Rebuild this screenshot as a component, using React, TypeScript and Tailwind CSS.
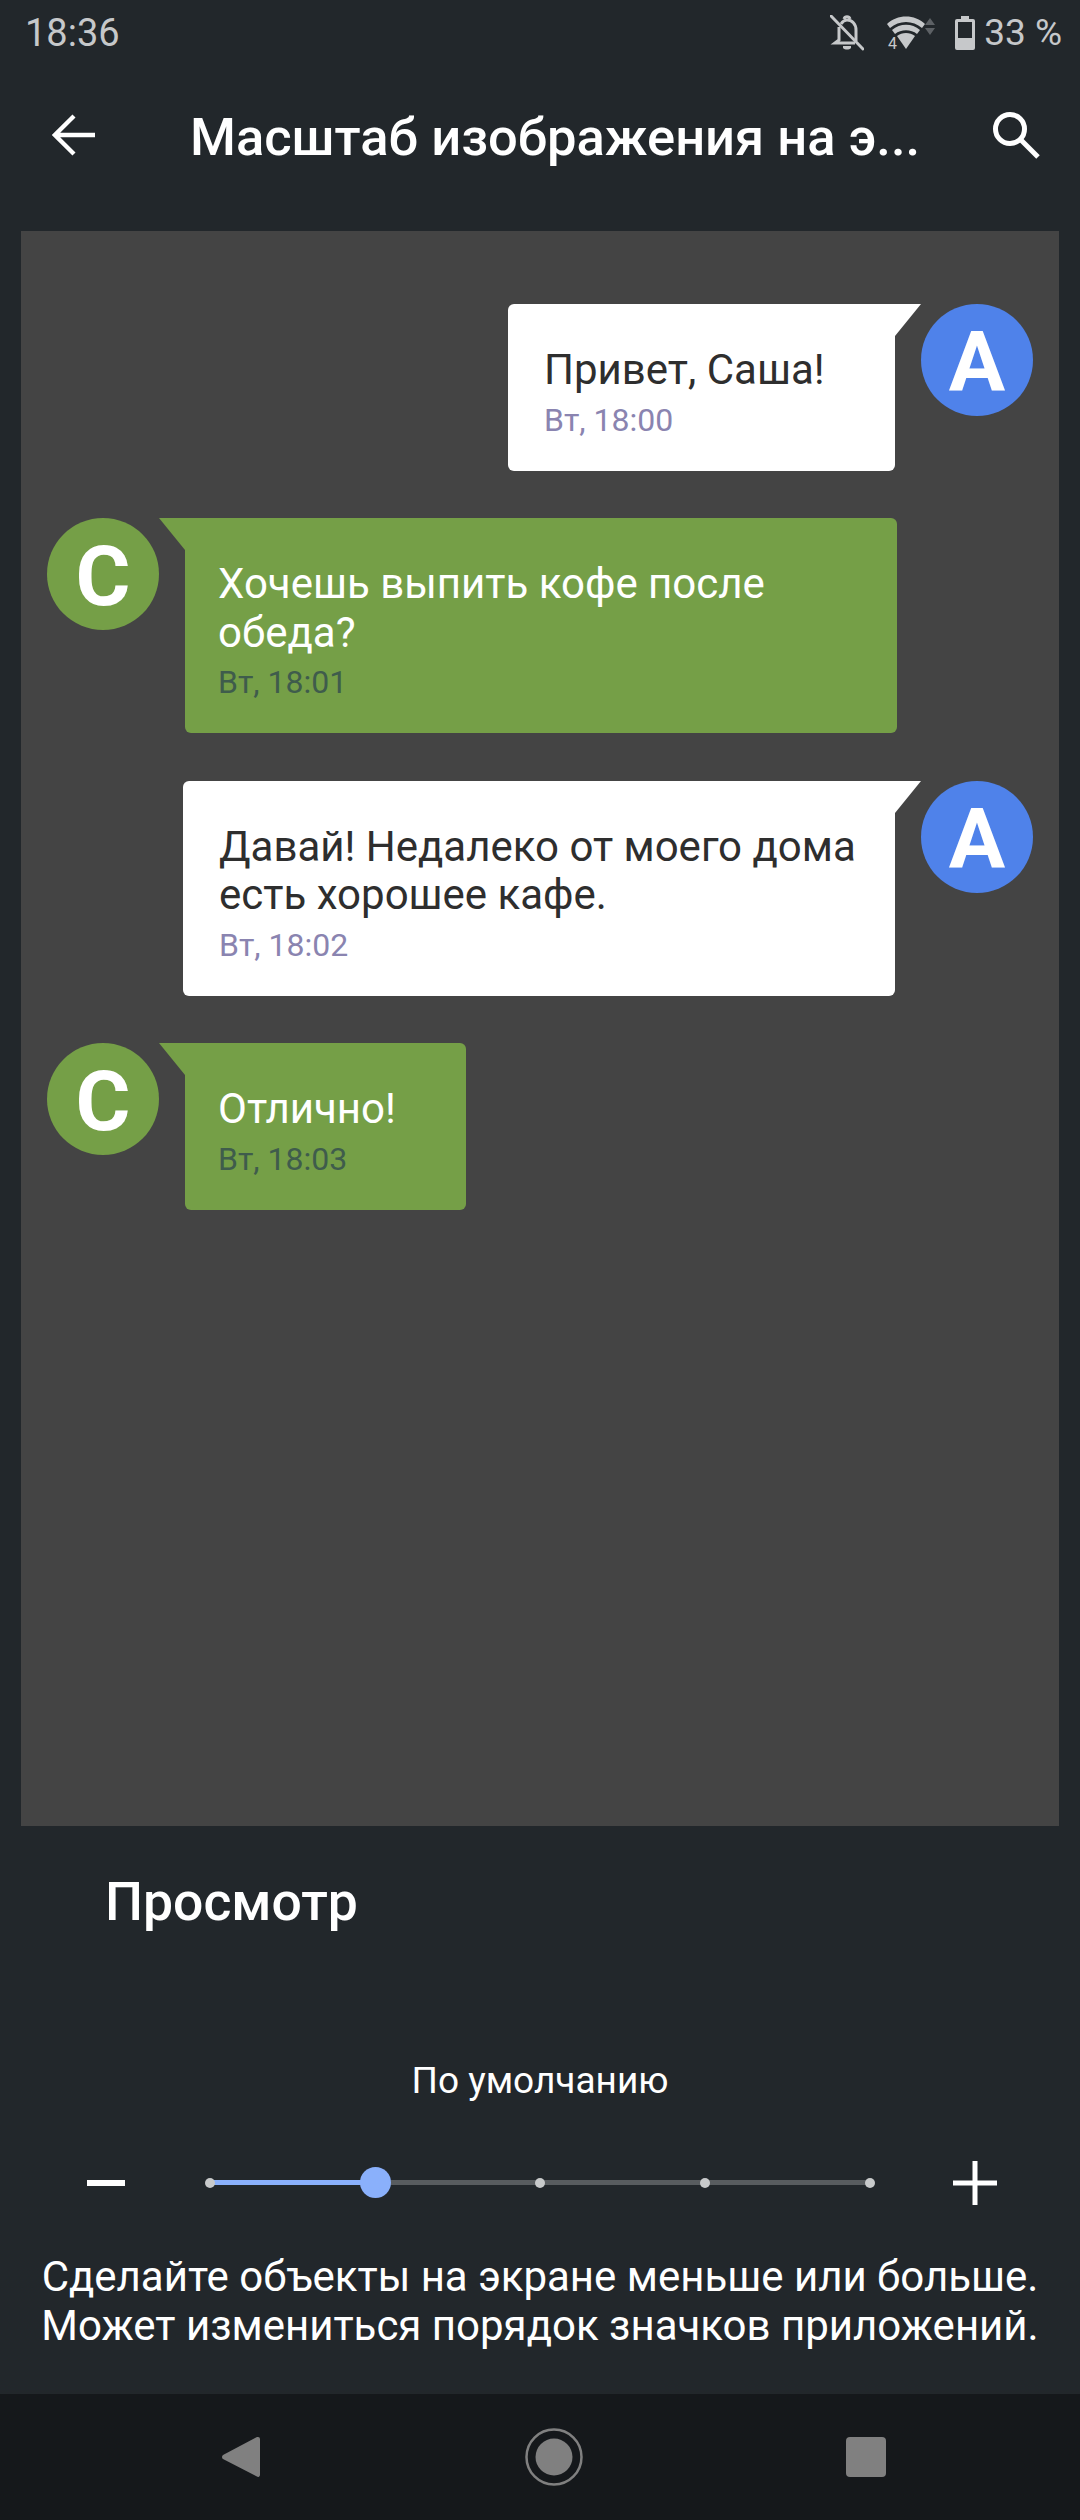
import React from 'react';

const ROBOTO = "font-['Roboto',sans-serif]";

const BellOff = () => (
  <svg width="34" height="36" viewBox="0 0 34 36" fill="none" stroke="#c6c8ca" strokeWidth="3">
    <path d="M9 12v13l-4 3h20M11 9c2-3 4-4 6-4 5 0 9 4 9 10v11" />
    <path d="M14 4c1-3 5-3 6 0" />
    <path d="M1 1l32 33" strokeLinecap="round" />
    <path d="M13 31h8v2c-2 2-6 2-8 0z" fill="#c6c8ca" stroke="none" />
  </svg>
);

const Wifi = () => (
  <svg className="mt-[8px]" width="48" height="44" viewBox="0 0 48 44">
    <path d="M0 9C10-1 28-1 38 9l-3 4C26 5 12 5 3 13z" fill="#c6c8ca" />
    <path d="M5 15c8-7 20-7 28 0l-3 4c-6-5-16-5-22 0z" fill="#c6c8ca" />
    <path d="M10 21c5-4 13-4 18 0l-9 13z" fill="#c6c8ca" />
    <path d="M38 10l5-7 5 7zM38 13h10l-5 7z" fill="#5d6165" />
    <text x="1" y="34" fontSize="16" fill="#c6c8ca" fontFamily="Roboto, sans-serif">4</text>
  </svg>
);

const Battery = () => (
  <svg width="20" height="34" viewBox="0 0 20 34">
    <path d="M6 0h8v3h4a2 2 0 0 1 2 2v27a2 2 0 0 1-2 2H2a2 2 0 0 1-2-2V5a2 2 0 0 1 2-2h4z" fill="#c6c8ca" />
    <rect x="3" y="6" width="14" height="16" fill="#22272b" />
  </svg>
);

const StatusBar = () => (
  <div className={`h-[64px] pt-[2px] flex items-center justify-between pl-[25px] pr-[18px] text-[#c6c8ca] ${ROBOTO}`}>
    <span className="text-[38px]">18:36</span>
    <div className="flex items-center">
      <BellOff />
      <div className="ml-[23px]"><Wifi /></div>
      <div className="ml-[20px]"><Battery /></div>
      <span className="ml-[9px] text-[37px]">33 %</span>
    </div>
  </div>
);

const Header = () => (
  <div className={`h-[167px] pb-[25px] flex items-center text-white ${ROBOTO}`}>
    <svg className="ml-[52px]" width="44" height="42" viewBox="0 0 46 44" fill="none" stroke="#fff" strokeWidth="4.5">
      <path d="M45 22H4M23 2L3 22l20 20" />
    </svg>
    <h1 className="ml-[94px] w-[735px] pt-[5px] text-[52.5px] font-medium whitespace-nowrap">Масштаб изображения на э...</h1>
    <svg className="ml-[67px] mt-[2px]" width="50" height="50" viewBox="0 0 50 50" fill="none" stroke="#fff" strokeWidth="5">
      <circle cx="18" cy="18" r="14.5" />
      <path d="M28 28l18 18" />
    </svg>
  </div>
);

interface MessageProps {
  side: 'left' | 'right';
  text: string[];
  time: string;
  width: string;
}

const Message = ({ side, text, time, width }: MessageProps) => {
  const mine = side === 'right';
  const bubble = (
    <div
      className={`relative pt-[42px] pb-[27px] ${width} ${
        mine
          ? 'pl-[36px] bg-white rounded-b-[6px] rounded-tl-[6px] text-[#2e2e2e]'
          : 'pl-[33px] bg-[#759f47] rounded-b-[6px] rounded-tr-[6px] text-white'
      }`}
    >
      <svg
        className={`absolute top-0 ${mine ? 'left-full' : 'right-full'}`}
        width="26"
        height="32"
        viewBox="0 0 26 32"
      >
        <path d={mine ? 'M0 0h26L0 32z' : 'M0 0h26v32z'} fill={mine ? '#fff' : '#759f47'} />
      </svg>
      {text.map((line) => (
        <div key={line} className="text-[42px] leading-[48.5px] whitespace-nowrap">{line}</div>
      ))}
      <div className={`pt-[2px] text-[32px] leading-[47px] ${mine ? 'text-[#8a84b0]' : 'text-[#3f5c4c]'}`}>{time}</div>
    </div>
  );
  const avatar = (
    <div
      className={`w-[112px] h-[112px] pt-[6px] rounded-full flex items-center justify-center text-white text-[84px] font-bold shrink-0 ${
        mine ? 'bg-[#4f82ea]' : 'bg-[#759f47]'
      }`}
    >
      {mine ? 'A' : 'C'}
    </div>
  );
  return (
    <div className={`flex items-start gap-[26px] ${mine ? 'justify-end' : 'justify-start'}`}>
      {mine ? bubble : avatar}
      {mine ? avatar : bubble}
    </div>
  );
};

const Preview = () => (
  <div className={`mx-[21px] h-[1595px] bg-[#444444] px-[26px] pt-[73px] flex flex-col gap-[47.5px] ${ROBOTO}`}>
    <Message side="right" text={['Привет, Саша!']} time="Вт, 18:00" width="w-[387px]" />
    <Message side="left" text={['Хочешь выпить кофе после', 'обеда?']} time="Вт, 18:01" width="w-[712px]" />
    <Message side="right" text={['Давай! Недалеко от моего дома', 'есть хорошее кафе.']} time="Вт, 18:02" width="w-[712px]" />
    <Message side="left" text={['Отлично!']} time="Вт, 18:03" width="w-[281px]" />
  </div>
);

const Slider = () => (
  <div className="relative h-[40px] w-[660px]">
    <div className="absolute left-0 right-0 top-[17px] h-[5px] bg-[#585c5f]" />
    <div className="absolute left-0 w-[165px] top-[17px] h-[5px] bg-[#8ab0fb]" />
    {[0, 330, 495, 660].map((x) => (
      <div
        key={x}
        className="absolute top-[15px] w-[10px] h-[10px] -ml-[5px] rounded-full bg-[#c8cacb]"
        style={{ left: x }}
      />
    ))}
    <div className="absolute left-[165px] top-[4px] w-[31px] h-[31px] -ml-[15px] rounded-full bg-[#8ab0fb]" />
  </div>
);

const Controls = () => (
  <div className={`flex-1 text-white ${ROBOTO}`}>
    <div className="pl-[105px] pt-[46px] text-[53.5px] font-medium leading-[60px]">Просмотр</div>
    <div className="mt-[127px] text-center text-[37px] leading-[44px]">По умолчанию</div>
    <div className="mt-[58px] flex items-center pl-[87px]">
      <div className="w-[38px] h-[6px] bg-white" />
      <div className="ml-[85px]"><Slider /></div>
      <svg className="ml-[83px]" width="44" height="44" viewBox="0 0 44 44" stroke="#fff" strokeWidth="5">
        <path d="M0 22h44M22 0v44" />
      </svg>
    </div>
    <div className="mt-[47px] text-center text-[42px] leading-[49px] whitespace-nowrap">
      <div>Сделайте объекты на экране меньше или больше.</div>
      <div>Может измениться порядок значков приложений.</div>
    </div>
  </div>
);

const NavBar = () => (
  <div className="h-[126px] bg-[#15181b] flex items-center pl-[222px]">
    <svg width="38" height="42" viewBox="0 0 38 42">
      <path d="M36 1a2 2 0 0 1 2 2v36a2 2 0 0 1-3 1.6L1 23a2.5 2.5 0 0 1 0-4L35 1z" fill="#808080" />
    </svg>
    <svg className="ml-[265px]" width="58" height="58" viewBox="0 0 58 58">
      <circle cx="29" cy="29" r="27.5" fill="none" stroke="#808080" strokeWidth="2.5" />
      <circle cx="29" cy="29" r="18.5" fill="#808080" />
    </svg>
    <div className="ml-[263px] w-[40px] h-[40px] rounded-[4px] bg-[#808080]" />
  </div>
);

export default function App() {
  return (
    <div className="w-[1080px] h-[2520px] bg-[#22272b] flex flex-col overflow-hidden">
      <StatusBar />
      <Header />
      <Preview />
      <Controls />
      <NavBar />
    </div>
  );
}
